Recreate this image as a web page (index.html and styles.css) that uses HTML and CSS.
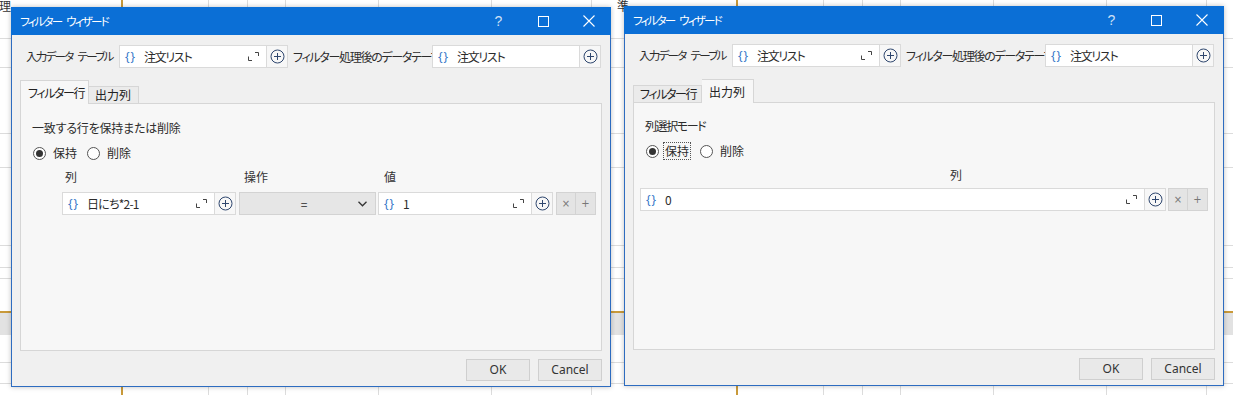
FILE: index.html
```html
<!DOCTYPE html>
<html lang="ja">
<head>
    <meta charset="UTF-8">
    <meta name="viewport" content="width=device-width, initial-scale=1.0">
    <title>フィルター ウィザード</title>
    <link rel="stylesheet" href="styles.css">
</head>
<body>
<div class="screens">

    <!-- Left capture: filter rows tab -->
    <div class="shot shot-left">
        <span class="bg-glyph glyph-left">理</span>
        <div class="dialog">
            <div class="titlebar">
                <span class="title">フィルター ウィザード</span>
                <div class="win-buttons">
                    <span class="win-btn win-help">?</span>
                    <span class="win-btn"><svg width="11" height="11" viewBox="0 0 11 11"><rect x="0.5" y="0.5" width="10" height="10" fill="none" stroke="#fff"/></svg></span>
                    <span class="win-btn"><svg width="12" height="12" viewBox="0 0 12 12"><path d="M0.5 0.5L11.5 11.5M11.5 0.5L0.5 11.5" stroke="#fff" stroke-width="1.1"/></svg></span>
                </div>
            </div>
            <div class="dialog-body">
                <div class="table-row">
                    <span class="field-label">入力データ テーブル</span>
                    <div class="expr-field">
                        <span class="braces">{}</span>
                        <span class="expr-text kana">注文リスト</span>
                        <svg class="expand" width="11" height="9" viewBox="0 0 11 9"><path d="M0.5 4.5V8.5H4 M7 0.5H10.5V4" fill="none" stroke="#444"/></svg>
                    </div>
                    <span class="add-btn"><svg width="15" height="15" viewBox="0 0 15 15"><circle cx="7.5" cy="7.5" r="6.5" fill="none" stroke="#2e466e"/><path d="M7.5 4V11M4 7.5H11" stroke="#2e466e"/></svg></span>
                    <span class="field-label field-label-clip">フィルター処理後のデータテーブル</span>
                    <div class="expr-field">
                        <span class="braces">{}</span>
                        <span class="expr-text kana">注文リスト</span>
                    </div>
                    <span class="add-btn"><svg width="15" height="15" viewBox="0 0 15 15"><circle cx="7.5" cy="7.5" r="6.5" fill="none" stroke="#2e466e"/><path d="M7.5 4V11M4 7.5H11" stroke="#2e466e"/></svg></span>
                </div>

                <div class="tabs">
                    <span class="tab tab-filter active">フィルター行</span>
                    <span class="tab tab-output">出力列</span>
                </div>

                <div class="panel">
                    <div class="caption">一致する行を保持または削除</div>
                    <div class="radio-row">
                        <span class="radio checked"></span><span class="radio-label">保持</span>
                        <span class="radio"></span><span class="radio-label">削除</span>
                    </div>
                    <div class="col-heads">
                        <span class="head-col">列</span>
                        <span class="head-op">操作</span>
                        <span class="head-val">値</span>
                    </div>
                    <div class="filter-row">
                        <div class="expr-field col-field">
                            <span class="braces">{}</span>
                            <span class="expr-text tight">日にち*2-1</span>
                            <svg class="expand" width="11" height="9" viewBox="0 0 11 9"><path d="M0.5 4.5V8.5H4 M7 0.5H10.5V4" fill="none" stroke="#444"/></svg>
                        </div>
                        <span class="add-btn"><svg width="15" height="15" viewBox="0 0 15 15"><circle cx="7.5" cy="7.5" r="6.5" fill="none" stroke="#2e466e"/><path d="M7.5 4V11M4 7.5H11" stroke="#2e466e"/></svg></span>
                        <div class="select">
                            <span class="select-value">=</span>
                            <svg width="9" height="6" viewBox="0 0 9 6"><path d="M0.5 0.8L4.5 4.8L8.5 0.8" fill="none" stroke="#333" stroke-width="1.3"/></svg>
                        </div>
                        <div class="expr-field val-field">
                            <span class="braces">{}</span>
                            <span class="expr-text">1</span>
                            <svg class="expand" width="11" height="9" viewBox="0 0 11 9"><path d="M0.5 4.5V8.5H4 M7 0.5H10.5V4" fill="none" stroke="#444"/></svg>
                        </div>
                        <span class="add-btn"><svg width="15" height="15" viewBox="0 0 15 15"><circle cx="7.5" cy="7.5" r="6.5" fill="none" stroke="#2e466e"/><path d="M7.5 4V11M4 7.5H11" stroke="#2e466e"/></svg></span>
                        <span class="mini-btn first">×</span>
                        <span class="mini-btn">+</span>
                    </div>
                </div>

                <div class="footer">
                    <span class="btn">OK</span>
                    <span class="btn">Cancel</span>
                </div>
            </div>
        </div>
    </div>

    <!-- Right capture: output columns tab -->
    <div class="shot shot-right">
        <span class="bg-glyph glyph-right">準</span>
        <div class="dialog">
            <div class="titlebar">
                <span class="title">フィルター ウィザード</span>
                <div class="win-buttons">
                    <span class="win-btn win-help">?</span>
                    <span class="win-btn"><svg width="11" height="11" viewBox="0 0 11 11"><rect x="0.5" y="0.5" width="10" height="10" fill="none" stroke="#fff"/></svg></span>
                    <span class="win-btn"><svg width="12" height="12" viewBox="0 0 12 12"><path d="M0.5 0.5L11.5 11.5M11.5 0.5L0.5 11.5" stroke="#fff" stroke-width="1.1"/></svg></span>
                </div>
            </div>
            <div class="dialog-body">
                <div class="table-row">
                    <span class="field-label">入力データ テーブル</span>
                    <div class="expr-field">
                        <span class="braces">{}</span>
                        <span class="expr-text kana">注文リスト</span>
                        <svg class="expand" width="11" height="9" viewBox="0 0 11 9"><path d="M0.5 4.5V8.5H4 M7 0.5H10.5V4" fill="none" stroke="#444"/></svg>
                    </div>
                    <span class="add-btn"><svg width="15" height="15" viewBox="0 0 15 15"><circle cx="7.5" cy="7.5" r="6.5" fill="none" stroke="#2e466e"/><path d="M7.5 4V11M4 7.5H11" stroke="#2e466e"/></svg></span>
                    <span class="field-label field-label-clip">フィルター処理後のデータテーブル</span>
                    <div class="expr-field">
                        <span class="braces">{}</span>
                        <span class="expr-text kana">注文リスト</span>
                    </div>
                    <span class="add-btn"><svg width="15" height="15" viewBox="0 0 15 15"><circle cx="7.5" cy="7.5" r="6.5" fill="none" stroke="#2e466e"/><path d="M7.5 4V11M4 7.5H11" stroke="#2e466e"/></svg></span>
                </div>

                <div class="tabs">
                    <span class="tab tab-filter">フィルター行</span>
                    <span class="tab tab-output active">出力列</span>
                </div>

                <div class="panel panel-output">
                    <div class="caption kana">列選択モード</div>
                    <div class="radio-row">
                        <span class="radio checked"></span><span class="radio-label focused">保持</span>
                        <span class="radio"></span><span class="radio-label">削除</span>
                    </div>
                    <div class="col-heads center">
                        <span>列</span>
                    </div>
                    <div class="filter-row">
                        <div class="expr-field wide-field">
                            <span class="braces">{}</span>
                            <span class="expr-text">0</span>
                            <svg class="expand" width="11" height="9" viewBox="0 0 11 9"><path d="M0.5 4.5V8.5H4 M7 0.5H10.5V4" fill="none" stroke="#444"/></svg>
                        </div>
                        <span class="add-btn"><svg width="15" height="15" viewBox="0 0 15 15"><circle cx="7.5" cy="7.5" r="6.5" fill="none" stroke="#2e466e"/><path d="M7.5 4V11M4 7.5H11" stroke="#2e466e"/></svg></span>
                        <span class="mini-btn first">×</span>
                        <span class="mini-btn">+</span>
                    </div>
                </div>

                <div class="footer">
                    <span class="btn">OK</span>
                    <span class="btn">Cancel</span>
                </div>
            </div>
        </div>
    </div>

</div>
</body>
</html>
```

FILE: styles.css
```css
/* Page */
body {
    margin: 0;
    background: #fff;
    font-family: "Noto Sans CJK JP", "Noto Sans", sans-serif;
    font-size: 12px;
    color: #2c2c2c;
    font-feature-settings: "palt";
}

.screens {
    display: flex;
    width: 1233px;
    height: 395px;
    overflow: hidden;
}

/* Spreadsheet behind each dialog */
.shot {
    position: relative;
    height: 395px;
    box-sizing: border-box;
    overflow: hidden;
    background-color: #fff;
    background-image:
        linear-gradient(to bottom, transparent 311px, #c99a3a 311px, #c99a3a 313px, #e2e2e2 313px, #e2e2e2 335px, transparent 335px),
        linear-gradient(to bottom, transparent 38px, #dcdcdc 38px, #dcdcdc 39px, transparent 39px,
            transparent 67px, #dcdcdc 67px, #dcdcdc 68px, transparent 68px,
            transparent 133px, #dcdcdc 133px, #dcdcdc 134px, transparent 134px,
            transparent 167px, #dcdcdc 167px, #dcdcdc 168px, transparent 168px,
            transparent 245px, #dcdcdc 245px, #dcdcdc 246px, transparent 246px,
            transparent 267px, #dcdcdc 267px, #dcdcdc 268px, transparent 268px,
            transparent 278px, #dcdcdc 278px, #dcdcdc 279px, transparent 279px,
            transparent 362px, #dcdcdc 362px, #dcdcdc 363px, transparent 363px,
            transparent 383px, #dcdcdc 383px, #dcdcdc 384px, transparent 384px),
        linear-gradient(to right, transparent 121px, #c99a3a 121px, #c99a3a 123px, transparent 123px,
            transparent 208px, #dcdcdc 208px, #dcdcdc 209px, transparent 209px,
            transparent 247px, #dcdcdc 247px, #dcdcdc 248px, transparent 248px,
            transparent 285px, #dcdcdc 285px, #dcdcdc 286px, transparent 286px,
            transparent 378px, #dcdcdc 378px, #dcdcdc 379px, transparent 379px,
            transparent 491px, #dcdcdc 491px, #dcdcdc 492px, transparent 492px,
            transparent 591px, #dcdcdc 591px, #dcdcdc 592px, transparent 592px);
}

.shot-left {
    width: 615px;
    padding: 7px 0 0 11px;
}

.shot-right {
    width: 618px;
    padding: 6px 0 0 9px;
}

.bg-glyph {
    position: absolute;
    top: -3px;
    font-size: 12px;
    color: #333;
}

.glyph-left { left: -1px; }
.glyph-right { left: 2px; }

/* Dialog window */
.dialog {
    position: relative;
    z-index: 1;
    width: 600px;
    height: 380px;
    box-sizing: border-box;
    border: 1px solid #2d6cc0;
    border-top: none;
    background: #f0f0f0;
    box-shadow: 0 0 5px rgba(0, 0, 0, 0.25);
    display: flex;
    flex-direction: column;
}

.titlebar {
    height: 28px;
    margin: 0 -1px;
    padding-left: 9px;
    background: #0b6fd6;
    color: #fff;
    display: flex;
    align-items: center;
}

.title {
    flex: 1;
    font-size: 11.5px;
    line-height: 14px;
    letter-spacing: -1.8px;
    word-spacing: 4px;
    white-space: nowrap;
}

.win-buttons {
    display: flex;
    height: 100%;
}

.win-btn {
    width: 45px;
    height: 100%;
    display: flex;
    align-items: center;
    justify-content: center;
    color: #cfe0f5;
}

.win-help {
    font-family: "Liberation Sans", sans-serif;
    font-size: 14px;
}

.dialog-body {
    padding: 0 8px;
}

/* Input / output table row */
.table-row {
    display: flex;
    height: 23px;
    margin-top: 10px;
}

.field-label {
    width: 99px;
    box-sizing: border-box;
    padding-left: 6px;
    line-height: 23px;
    white-space: nowrap;
    overflow: hidden;
    font-size: 11.5px;
    letter-spacing: -1.7px;
    word-spacing: 4px;
}

.field-label-clip {
    width: 144px;
    padding-left: 5px;
    padding-right: 3px;
    font-size: 12px;
    letter-spacing: -1.3px;
}

.expr-field {
    width: 148px;
    box-sizing: border-box;
    background: #fff;
    border: 1px solid #dadada;
    display: flex;
    align-items: center;
    padding: 0 6px 0 5px;
}

.braces {
    color: #3578c8;
    font-family: "Noto Sans", sans-serif;
    font-size: 12px;
    letter-spacing: 1px;
    width: 14px;
}

.expr-text {
    flex: 1;
    padding-left: 5px;
    white-space: nowrap;
}

.expr-text.kana { letter-spacing: -1.3px; }
.expr-text.tight { letter-spacing: -0.8px; }

.expand {
    margin-right: 1px;
}

.add-btn {
    width: 21px;
    box-sizing: border-box;
    background: #f7f7f7;
    border: 1px solid #dadada;
    border-left: none;
    display: flex;
    align-items: center;
    justify-content: center;
}

/* Tabs */
.tabs {
    display: flex;
    align-items: flex-end;
    height: 23px;
    margin-top: 12px;
}

.tab {
    height: 17px;
    box-sizing: border-box;
    border: 1px solid #d6d6d6;
    border-bottom: none;
    background: #ebebeb;
    padding-left: 6px;
    line-height: 16px;
    color: #222;
    white-space: nowrap;
    letter-spacing: -1.4px;
}

.tab-filter { width: 69px; }
.tab-output { width: 50px; letter-spacing: 0; }

.tab.active {
    height: 24px;
    margin-bottom: -1px;
    background: #f7f7f7;
    line-height: 24px;
    position: relative;
    z-index: 1;
}

.tab-output.active {
    width: 52px;
    padding-left: 7px;
}

.tab-filter + .tab-output { border-left: none; }
.tab-filter.active { padding-left: 7px; }

/* Panel */
.panel {
    height: 248px;
    box-sizing: border-box;
    border: 1px solid #d6d6d6;
    background: #f7f7f7;
    padding-top: 16px;
}

.caption {
    padding-left: 11px;
    line-height: 16px;
    letter-spacing: -0.2px;
}

.caption.kana { letter-spacing: -1.4px; }

.radio-row {
    display: flex;
    align-items: center;
    height: 16px;
    margin-top: 9px;
    padding-left: 12px;
}

.radio {
    width: 13px;
    height: 13px;
    box-sizing: border-box;
    border: 1px solid #555;
    border-radius: 50%;
    background: #fff;
    position: relative;
}

.radio.checked::after {
    content: "";
    position: absolute;
    left: 2px;
    top: 2px;
    width: 7px;
    height: 7px;
    border-radius: 50%;
    background: #333;
}

.radio-label {
    margin-left: 7px;
    margin-right: 10px;
    line-height: 16px;
}

.radio-label.focused {
    outline: 1px dotted #555;
    padding: 0 1px;
    margin-left: 5px;
    margin-right: 10px;
}

.col-heads {
    display: flex;
    height: 16px;
    line-height: 16px;
    margin-top: 8px;
    color: #333;
}

.head-col { margin-left: 44px; width: 179px; }
.head-op { width: 140px; }

.col-heads.center {
    justify-content: center;
    padding-left: 64px;
}

.filter-row {
    display: flex;
    height: 23px;
    margin-top: 7px;
    padding-left: 41px;
}

.col-field { width: 153px; }
.val-field { width: 154px; }

.select {
    width: 137px;
    margin-left: 3px;
    margin-right: 2px;
    box-sizing: border-box;
    background: #e6e6e6;
    border: 1px solid #d3d3d3;
    display: flex;
    align-items: center;
    padding: 0 8px 0 0;
}

.select-value {
    flex: 1;
    text-align: center;
    padding-left: 10px;
}

.mini-btn {
    width: 20px;
    box-sizing: border-box;
    background: #e4e4e4;
    border: 1px solid #d3d3d3;
    border-left: none;
    color: #777;
    font-family: "DejaVu Sans", sans-serif;
    font-size: 10px;
    display: flex;
    align-items: center;
    justify-content: center;
}

.mini-btn.first {
    margin-left: 3px;
    border-left: 1px solid #d3d3d3;
}

.panel-output {
    padding-top: 15px;
}

.panel-output .filter-row {
    margin-top: 5px;
    padding-left: 6px;
}

.wide-field { width: 505px; }

.panel-output .mini-btn.first { margin-left: 2px; }

/* Footer buttons */
.footer {
    display: flex;
    justify-content: flex-end;
    gap: 8px;
    margin-top: 8px;
}

.btn {
    width: 64px;
    height: 22px;
    box-sizing: border-box;
    border: 1px solid #cfcfcf;
    background: #e9e9e9;
    text-align: center;
    line-height: 20px;
    font-family: "Noto Sans", sans-serif;
    color: #333;
}
```
